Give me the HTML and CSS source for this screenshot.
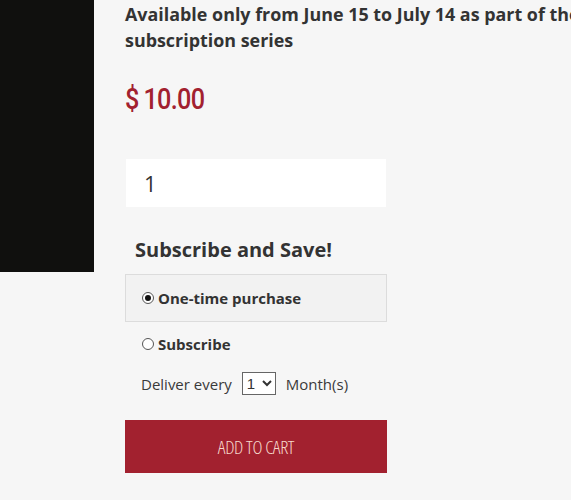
FILE: index.html
```html
<!DOCTYPE html>
<html lang="en">
<head>
    <meta charset="UTF-8">
    <meta name="viewport" content="width=device-width, initial-scale=1.0">
    <title>Subscription Box</title>
    <link rel="stylesheet" href="styles.css">
</head>
<body>
    <div class="page">
        <div class="product-image"></div>

        <div class="product-info">
            <h1 class="product-title">Available only from June 15 to July 14 as part of the summer subscription series</h1>

            <div class="price">$ 10.00</div>

            <input class="qty" type="text" value="1">

            <h2 class="subscribe-title">Subscribe and Save!</h2>

            <label class="option option-active">
                <input type="radio" name="plan" checked>
                <span>One-time purchase</span>
            </label>

            <label class="option option-sub">
                <input type="radio" name="plan">
                <span>Subscribe</span>
            </label>

            <div class="deliver">
                <span>Deliver every</span>
                <select class="interval">
                    <option>1</option>
                    <option>2</option>
                    <option>3</option>
                </select>
                <span>Month(s)</span>
            </div>

            <button class="add-to-cart">ADD TO CART</button>
        </div>
    </div>
</body>
</html>
```

FILE: styles.css
```css
html, body {
    margin: 0;
    overflow: hidden;
}
body {
    font-family: "Open Sans", Arial, sans-serif;
    background: #f6f6f6;
    color: #333;
}
.page {
    display: flex;
    align-items: flex-start;
    width: 720px;
}
.product-image {
    flex: 0 0 94px;
    height: 272px;
    background: #10100e;
}
.product-info {
    display: flex;
    flex-direction: column;
    align-items: flex-start;
    padding-left: 31px;
    width: 590px;
}
.product-title {
    margin: 1px 0 0;
    font-size: 17.9px;
    line-height: 26px;
    font-weight: 700;
    color: #333;
}
.price {
    margin-top: 29px;
    font-family: Roboto, sans-serif;
    font-size: 30px;
    line-height: 34px;
    font-weight: 500;
    letter-spacing: -0.8px;
    word-spacing: -1px;
    color: #a2212f;
    transform: scaleX(0.84);
    transform-origin: left center;
}
.qty {
    margin: 43px 0 0 1px;
    box-sizing: border-box;
    width: 260px;
    height: 48px;
    border: none;
    background: #fff;
    padding: 0 18px;
    font-family: "Open Sans", sans-serif;
    font-size: 22px;
    color: #333;
}
.subscribe-title {
    margin: 28px 0 9px 10px;
    font-size: 20px;
    line-height: 30px;
    font-weight: 700;
}
.option {
    display: flex;
    align-items: center;
    gap: 4px;
    box-sizing: border-box;
    width: 262px;
    height: 48px;
    padding-left: 16px;
    font-size: 15px;
    font-weight: 700;
    border: 1px solid transparent;
}
.option input {
    appearance: none;
    -webkit-appearance: none;
    box-sizing: border-box;
    margin: 0;
    width: 12px;
    height: 12px;
    border: 1px solid #555;
    border-radius: 50%;
    background: #fff;
    display: grid;
    place-content: center;
}
.option input:checked::before {
    content: "";
    width: 6px;
    height: 6px;
    border-radius: 50%;
    background: #111;
}
.option-active {
    background: #f2f2f2;
    border-color: #dcdcdc;
}
.option-sub {
    height: 44px;
}
.deliver {
    display: flex;
    align-items: center;
    gap: 10px;
    margin: 6px 0 0 16px;
    font-size: 15px;
    color: #3a3a3a;
}
.interval {
    height: 23px;
    width: 34px;
    font-size: 15px;
    border: 1px solid #666;
    border-radius: 0;
    background: #fff;
    color: #333;
}
.add-to-cart {
    margin-top: 25px;
    width: 262px;
    height: 53px;
    border: none;
    background: #a2212f;
    color: #f6d9cc;
    font-family: "Open Sans", sans-serif;
    font-stretch: 75%;
    font-weight: 300;
    font-size: 19px;
    letter-spacing: -0.4px;
    cursor: pointer;
}
```
